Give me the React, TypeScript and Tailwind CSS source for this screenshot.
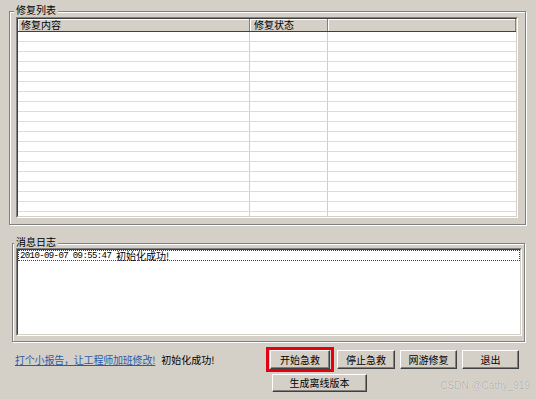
import React from "react";

const btn =
  "bg-[#d4d0c8] border border-t-white border-l-white border-r-[#404040] border-b-[#404040] shadow-[inset_-1px_-1px_0_#808080] text-[10px] leading-[12px] text-black flex items-center justify-center";

export default function App() {
  const rows = Array.from({ length: 19 });
  return (
    <div className="w-[536px] h-[399px] bg-[#d4d0c8] overflow-hidden flex flex-col font-['Noto_Sans_CJK_SC','Noto_Sans',sans-serif] text-black">
      {/* Group 1 */}
      <div className="relative ml-[9px] mt-[11px] w-[517px] h-[214px] shrink-0 border border-[#808080] shadow-[inset_1px_1px_0_#fff,1px_1px_0_#fff] pt-[5px] pl-[6px]">
        <span className="absolute left-[4px] top-[-8px] bg-[#d4d0c8] px-[2px] text-[10px] leading-[12px]">
          修复列表
        </span>
        <div className="w-[502px] h-[201px] border border-t-[#808080] border-l-[#808080] border-r-white border-b-white">
          <div className="w-full h-full border border-t-[#404040] border-l-[#404040] border-r-[#d4d0c8] border-b-[#d4d0c8] bg-white overflow-hidden">
            <div className="flex h-[13px] bg-[#d4d0c8] border-b border-b-[#404040]">
              <div className="w-[232px] shrink-0 border-r border-r-[#808080] shadow-[inset_1px_1px_0_#fff] pl-[3px] text-[10px] leading-[12px]">
                修复内容
              </div>
              <div className="w-[78px] shrink-0 border-r border-r-[#808080] shadow-[inset_1px_1px_0_#fff] pl-[4px] text-[10px] leading-[12px]">
                修复状态
              </div>
              <div className="flex-1 border-r border-r-[#808080] shadow-[inset_1px_1px_0_#fff]" />
            </div>
            {rows.map((_, i) => (
              <div key={i} className="flex h-[10px] border-b border-b-[#dcdcdc]">
                <div className="w-[232px] shrink-0 border-r border-r-[#cfcfcf]" />
                <div className="w-[78px] shrink-0 border-r border-r-[#cfcfcf]" />
                <div className="flex-1" />
              </div>
            ))}
          </div>
        </div>
      </div>

      {/* Group 2 */}
      <div className="relative ml-[12px] mt-[18px] w-[513px] h-[99px] shrink-0 border border-[#808080] shadow-[inset_1px_1px_0_#fff,1px_1px_0_#fff] pt-[4px] pl-[3px]">
        <span className="absolute left-[1px] top-[-8px] bg-[#d4d0c8] px-[2px] text-[10px] leading-[12px]">
          消息日志
        </span>
        <div className="w-[506px] h-[88px] border border-t-[#808080] border-l-[#808080] border-r-white border-b-white">
          <div className="w-full h-full border border-t-[#404040] border-l-[#404040] border-r-[#d4d0c8] border-b-[#d4d0c8] bg-white overflow-hidden">
            <div className="h-[11px] border border-dotted border-[#404040] flex items-center pl-px whitespace-nowrap">
              <span className="font-['Liberation_Mono',monospace] text-[9px] leading-[10px] tracking-[-0.6px]">
                2010-09-07 09:55:47&nbsp;
              </span>
              <span className="text-[10px] leading-[10px]">初始化成功!</span>
            </div>
          </div>
        </div>
      </div>

      {/* Bottom */}
      <div className="flex mt-[5px]">
        <div className="w-[266px] shrink-0 h-[25px] flex items-center pl-[15px] gap-[6px] whitespace-nowrap">
          <span className="text-[10px] leading-[12px] tracking-[-0.2px] text-[#2a5ca8] underline">
            打个小报告，让工程师加班修改!
          </span>
          <span className="text-[10px] leading-[12px]">初始化成功!</span>
        </div>
        <div className="flex-1 flex flex-col">
          <div className="flex items-center">
            <div className="border-[3px] border-[#e3000f] px-px py-0">
              <div className={`${btn} w-[60px] h-[19px]`}>开始急救</div>
            </div>
            <div className={`${btn} ml-[3px] w-[58px] h-[19px]`}>停止急救</div>
            <div className={`${btn} ml-[5px] w-[57px] h-[19px]`}>网游修复</div>
            <div className={`${btn} ml-[5px] w-[57px] h-[19px]`}>退出</div>
          </div>
          <div className="flex items-end mt-[2px]">
            <div className={`${btn} ml-[6px] w-[95px] h-[18px]`}>生成离线版本</div>
            <span className="ml-auto mr-[6px] font-['Liberation_Sans',sans-serif] text-[10px] leading-[12px] text-[#b3b0aa] [text-shadow:0_0_1px_#ffffff]">
              CSDN @Cathy_919
            </span>
          </div>
        </div>
      </div>
    </div>
  );
}
